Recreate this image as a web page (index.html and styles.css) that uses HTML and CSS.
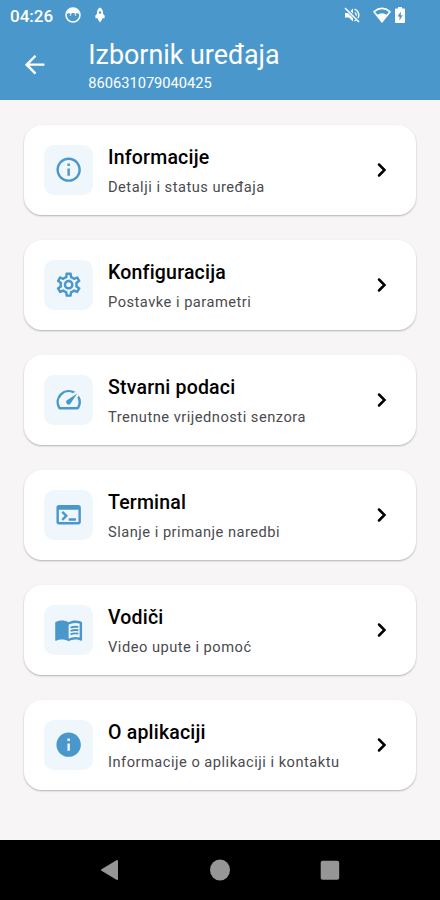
FILE: index.html
```
<!DOCTYPE html>
<html lang="hr">
<head>
<meta charset="utf-8">
<title>Izbornik uređaja</title>
<link rel="stylesheet" href="styles.css">
</head>
<body>
<header class="top">
  <div class="status">
    <span class="clock">04:26</span>
    <svg class="face" viewBox="0 0 16 16"><circle cx="8" cy="8" r="7" fill="none" stroke="#fff" stroke-width="1.500"/><path fill="#fff" d="M2 7C2 3 5 1 8 1s6 2 6 6l-2-1-1.500 1L8 5.800 5.500 7 4 6z"/><circle cx="5.500" cy="8" r=".8" fill="#fff"/><circle cx="10.500" cy="8" r=".8" fill="#fff"/></svg>
    <svg class="rocket" viewBox="0 0 10 16"><path fill="#fff" fill-rule="evenodd" d="M5 .5C7.200 1.500 8.200 4 8.100 7L9.600 8.500V11.200H7.500L6.800 13 5 15.500 3.200 13 2.500 11.200H.4V8.500L1.900 7C1.800 4 2.800 1.500 5 .5zM5 4.200a1.300 1.300 0 1 0 0 2.600 1.300 1.300 0 0 0 0-2.600z"/></svg>
    <span class="spacer"></span>
    <svg class="mute" viewBox="0 0 16 16"><path d="M1 1l14 14" stroke="#fff" stroke-width="1.600"/><path fill="#fff" d="M1 6h3l5 5v3.500L4.800 10.500H1zM9 1.500v5L6.500 4z"/><path d="M10.800 5.500q1.700 1.200 1.400 3.200M10.500 2.200q4.700 2 4.200 6.800-.2 1.300-.8 2.200M10.500 14l1.500-.8" fill="none" stroke="#fff" stroke-width="1.400"/></svg>
    <svg class="wifi" viewBox="0 0 18 16"><path d="M1 4.700Q9-1.800 17 4.700L9 14.800z" fill="none" stroke="#fff" stroke-width="1.600" stroke-linejoin="round"/><path fill="#fff" d="M3.800 8Q9 4.500 14.200 8L9 14.800z"/></svg>
    <svg class="battery" viewBox="0 0 10 16"><path fill="#fff" fill-rule="evenodd" d="M3 0h4v1.500h2q1 0 1 1V15q0 1-1 1H1q-1 0-1-1V2.500q0-1 1-1h2zM5.800 4.500L2.500 9.500h2v4L7.700 8.300H5.800z"/></svg>
  </div>
  <div class="bar">
    <svg class="icon back" viewBox="0 0 24 24"><path d="M20 11H7.830l5.590-5.590L12 4l-8 8 8 8 1.410-1.410L7.830 13H20v-2z"/></svg>
    <div class="heading">
      <h1>Izbornik uređaja</h1>
      <p>860631079040425</p>
    </div>
  </div>
</header>
<main class="menu">
  <a class="card">
    <span class="tile"><svg class="icon" viewBox="0 0 24 24"><path d="M11 7h2v2h-2zm0 4h2v6h-2zm1-9C6.480 2 2 6.480 2 12s4.480 10 10 10 10-4.480 10-10S17.520 2 12 2zm0 18c-4.410 0-8-3.590-8-8s3.590-8 8-8 8 3.590 8 8-3.590 8-8 8z"/></svg></span>
    <span class="text"><b>Informacije</b><small>Detalji i status uređaja</small></span>
    <svg class="chevron" viewBox="0 0 10 16"><path d="M2 2.500L7.500 8 2 13.500"/></svg>
  </a>
  <a class="card">
    <span class="tile"><svg class="icon" viewBox="0 0 24 24"><path d="M19.430 12.980c.04-.32.07-.64.07-.98 0-.34-.03-.66-.07-.98l2.110-1.650c.19-.15.24-.42.12-.64l-2-3.460c-.09-.16-.26-.25-.44-.25-.06 0-.12.01-.17.03l-2.490 1c-.52-.4-1.080-.73-1.690-.98l-.38-2.650C14.460 2.180 14.250 2 14 2h-4c-.25 0-.46.18-.49.42l-.38 2.650c-.61.25-1.170.59-1.690.98l-2.490-1c-.06-.02-.12-.03-.18-.03-.17 0-.34.09-.43.25l-2 3.460c-.13.22-.07.49.12.64l2.110 1.650c-.04.32-.07.65-.07.98 0 .33.03.66.07.98l-2.110 1.650c-.19.15-.24.42-.12.64l2 3.460c.09.16.26.25.44.25.06 0 .12-.01.17-.03l2.490-1c.52.4 1.080.73 1.690.98l.38 2.650c.03.24.24.42.49.42h4c.25 0 .46-.18.49-.42l.38-2.650c.61-.25 1.170-.59 1.690-.98l2.490 1c.06.02.12.03.18.03.17 0 .34-.09.43-.25l2-3.460c.12-.22.07-.49-.12-.64l-2.110-1.650zm-1.980-1.710c.04.31.05.52.05.73 0 .21-.02.43-.05.73l-.14 1.130.89.7 1.080.84-.7 1.210-1.270-.51-1.040-.42-.9.68c-.43.32-.84.56-1.250.73l-1.060.43-.16 1.130-.2 1.350h-1.400l-.19-1.350-.16-1.130-1.060-.43c-.43-.18-.83-.41-1.230-.71l-.91-.7-1.060.43-1.270.51-.7-1.210 1.080-.84.89-.7-.14-1.130c-.03-.31-.05-.54-.05-.74s.02-.43.05-.73l.14-1.130-.89-.7-1.080-.84.7-1.210 1.270.51 1.040.42.9-.68c.43-.32.84-.56 1.250-.73l1.060-.43.16-1.130.2-1.350h1.390l.19 1.350.16 1.130 1.060.43c.43.18.83.41 1.230.71l.91.7 1.060-.43 1.270-.51.7 1.210-1.070.85-.89.7.14 1.130zM12 8c-2.210 0-4 1.790-4 4s1.790 4 4 4 4-1.790 4-4-1.790-4-4-4zm0 6c-1.100 0-2-.9-2-2s.9-2 2-2 2 .9 2 2-.9 2-2 2z"/></svg></span>
    <span class="text"><b>Konfiguracija</b><small>Postavke i parametri</small></span>
    <svg class="chevron" viewBox="0 0 10 16"><path d="M2 2.500L7.500 8 2 13.500"/></svg>
  </a>
  <a class="card">
    <span class="tile"><svg class="icon" viewBox="0 0 24 24"><path d="M20.380 8.570l-1.230 1.850a8 8 0 0 1-.22 7.580H5.070A8 8 0 0 1 15.580 6.850l1.850-1.230A10 10 0 0 0 3.350 19a2 2 0 0 0 1.720 1h13.850a2 2 0 0 0 1.740-1 10 10 0 0 0-.27-10.440zm-9.790 6.840a2 2 0 0 0 2.830 0l5.660-8.490-8.490 5.660a2 2 0 0 0 0 2.830z"/></svg></span>
    <span class="text"><b>Stvarni podaci</b><small>Trenutne vrijednosti senzora</small></span>
    <svg class="chevron" viewBox="0 0 10 16"><path d="M2 2.500L7.500 8 2 13.500"/></svg>
  </a>
  <a class="card">
    <span class="tile"><svg class="icon" viewBox="0 0 24 24"><path d="M20 4H4c-1.110 0-2 .9-2 2v12c0 1.100.89 2 2 2h16c1.100 0 2-.9 2-2V6c0-1.100-.89-2-2-2zm0 14H4V8h16v10zm-2-1h-6v-2h6v2zM7.500 17l-1.410-1.410L8.670 13l-2.590-2.590L7.500 9l4 4-4 4z"/></svg></span>
    <span class="text"><b>Terminal</b><small>Slanje i primanje naredbi</small></span>
    <svg class="chevron" viewBox="0 0 10 16"><path d="M2 2.500L7.500 8 2 13.500"/></svg>
  </a>
  <a class="card">
    <span class="tile"><svg class="icon" viewBox="0 0 24 24"><path d="M21 5c-1.110-.35-2.330-.5-3.500-.5-1.950 0-4.050.4-5.500 1.500-1.450-1.100-3.550-1.500-5.500-1.500S2.450 4.900 1 6v14.650c0 .25.25.5.5.5.1 0 .15-.05.25-.05C3.100 20.450 5.050 20 6.500 20c1.950 0 4.050.4 5.500 1.500 1.350-.85 3.800-1.500 5.500-1.500 1.650 0 3.350.3 4.750 1.050.1.05.15.05.25.05.25 0 .5-.25.5-.5V6c-.6-.45-1.250-.75-2-1zm0 13.500c-1.100-.35-2.300-.5-3.500-.5-1.700 0-4.150.65-5.500 1.500V8c1.350-.85 3.800-1.500 5.500-1.500 1.200 0 2.400.15 3.500.5v11.500z"/><path class="lines" d="M13.500 10.400q3-1.200 6.500-.6M13.500 13.100q3-1.200 6.500-.6M13.500 15.800q3-1.200 6.500-.6"/></svg></span>
    <span class="text"><b>Vodiči</b><small>Video upute i pomoć</small></span>
    <svg class="chevron" viewBox="0 0 10 16"><path d="M2 2.500L7.500 8 2 13.500"/></svg>
  </a>
  <a class="card">
    <span class="tile"><svg class="icon" viewBox="0 0 24 24"><path d="M12 2C6.480 2 2 6.480 2 12s4.480 10 10 10 10-4.480 10-10S17.520 2 12 2zm1 15h-2v-6h2v6zm0-8h-2V7h2v2z"/></svg></span>
    <span class="text"><b>O aplikaciji</b><small>Informacije o aplikaciji i kontaktu</small></span>
    <svg class="chevron" viewBox="0 0 10 16"><path d="M2 2.500L7.500 8 2 13.500"/></svg>
  </a>
</main>
<nav class="nav">
  <svg viewBox="0 0 22 22"><path d="M3 11L18 2V20z" stroke-width="2" stroke-linejoin="round"/></svg>
  <svg viewBox="0 0 22 22"><ellipse cx="11" cy="11" rx="10" ry="10.500"/></svg>
  <svg viewBox="0 0 22 22"><rect x="1.700" y="1.700" width="18.500" height="19" rx="2"/></svg>
</nav>
</body>
</html>
```
FILE: styles.css
```
* { box-sizing: border-box; }
body {
  margin: 0;
  width: 440px;
  height: 900px;
  display: flex;
  flex-direction: column;
  overflow: hidden;
  background: #f7f5f6;
  font-family: Roboto, sans-serif;
}
h1, p { margin: 0; font-weight: 400; }
svg { display: block; flex: none; }

.top {
  height: 100px;
  background: #4a98cb;
  color: #fff;
}
.status {
  display: flex;
  align-items: center;
  height: 30px;
  padding: 0 35px 0 10px;
}
.clock { width: 43px; margin-right: 12px; font-size: 17px; font-weight: 500; line-height: 30px; padding-top: 1px; }
.face { width: 16px; height: 16px; margin-right: 14px; }
.rocket { width: 10px; height: 16px; }
.spacer { flex: 1; }
.mute { width: 16px; height: 16px; margin-right: 13px; }
.wifi { width: 18px; height: 16px; margin-right: 4px; }
.battery { width: 10px; height: 16px; }

.bar {
  display: flex;
  align-items: center;
  height: 70px;
  padding-left: 19.500px;
}
.icon { width: 29.300px; height: 29.300px; fill: #4a98cb; }
.back { fill: #fff; margin-right: 39.500px; }
.heading h1 { font-size: 26.850px; line-height: 32px; }
.heading p { font-size: 14.650px; line-height: 18px; margin-top: 3px; }

.menu {
  flex: 1;
  display: flex;
  flex-direction: column;
  gap: 25px;
  padding: 25px 24.500px 0 24px;
}
.card {
  display: flex;
  align-items: center;
  height: 90px;
  padding: 0 29px 0 20px;
  border-radius: 18px;
  background: #fff;
  box-shadow: 0 1px 2px rgba(0, 0, 0, .28);
}
.tile {
  display: flex;
  align-items: center;
  justify-content: center;
  width: 49px;
  height: 50px;
  margin-right: 15px;
  border-radius: 10px;
  background: #eff7fc;
}
.text { flex: 1; display: flex; flex-direction: column; padding-top: 1px; }
.text b { font-size: 19.500px; font-weight: 500; line-height: 28px; letter-spacing: .2px; color: #000; }
.text small { font-size: 14.650px; line-height: 22px; margin-top: 4px; letter-spacing: .5px; color: #4a4a4e; }
.chevron { width: 10px; height: 16px; }
.chevron path { fill: none; stroke: #000; stroke-width: 2.500; stroke-linecap: round; }
.lines { fill: none; stroke: #4a98cb; stroke-width: 1.500; }

.nav {
  display: flex;
  align-items: center;
  justify-content: center;
  gap: 88px;
  height: 60px;
  background: #000;
}
.nav svg { width: 22px; height: 22px; fill: #969696; }
.nav path { stroke: #969696; }
```
